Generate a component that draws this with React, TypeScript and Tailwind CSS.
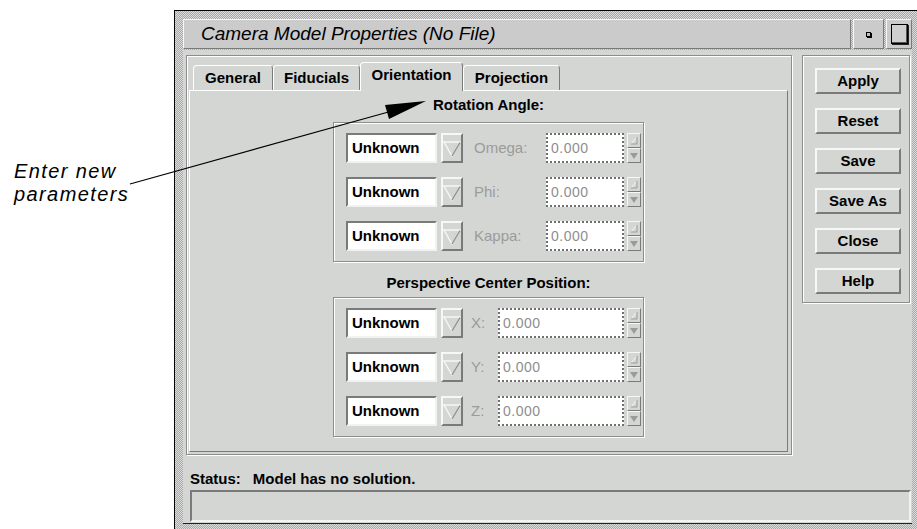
import React from "react"

const ui = { fontFamily: '"Liberation Sans", Arial, Helvetica, sans-serif' }

const raised = "border-2 border-t-[#f7f7f7] border-l-[#f7f7f7] border-r-[#7a7a7a] border-b-[#7a7a7a]"
const raised1 = "border border-t-[#f7f7f7] border-l-[#f7f7f7] border-r-[#7a7a7a] border-b-[#7a7a7a]"
const sunken = "border-2 border-t-[#7a7a7a] border-l-[#7a7a7a] border-r-[#f2f2f2] border-b-[#f2f2f2]"
const etched = "border border-[#8d8d8d] shadow-[inset_1px_1px_0_#ffffff,1px_1px_0_#ffffff]"
const stipple = "bg-[image:repeating-conic-gradient(#a8a8a8_0_25%,#dcdcdc_0_50%)] bg-[length:2px_2px]"

type RowDef = { label: string; labelCls: string; fieldCls: string }

const rotation: RowDef[] = [
  { label: "Omega:", labelCls: "ml-[11px] w-[72px]", fieldCls: "w-[78px]" },
  { label: "Phi:", labelCls: "ml-[11px] w-[72px]", fieldCls: "w-[78px]" },
  { label: "Kappa:", labelCls: "ml-[11px] w-[72px]", fieldCls: "w-[78px]" },
]

const position: RowDef[] = [
  { label: "X:", labelCls: "ml-[8px] w-[27px]", fieldCls: "w-[126px]" },
  { label: "Y:", labelCls: "ml-[8px] w-[27px]", fieldCls: "w-[126px]" },
  { label: "Z:", labelCls: "ml-[8px] w-[27px]", fieldCls: "w-[126px]" },
]

function OptionArrow() {
  return (
    <svg width="18" height="16" viewBox="0 0 18 16" className="mt-[1px]">
      <polygon points="1,1 17,1 9,15" fill="#d4d6d4" stroke="#f6f6f6" strokeWidth="1.4" />
      <line x1="17" y1="1.5" x2="9" y2="15" stroke="#8c8c8c" strokeWidth="1.4" />
    </svg>
  )
}

function Spinner() {
  return (
    <div className="ml-[3px] flex w-[14px] flex-col">
      <div className={`${raised1} flex h-[15px] items-center justify-center bg-[#d4d6d4]`}>
        <svg width="8" height="9" viewBox="0 0 8 9">
          <polygon points="1,8 7,8 7,1" fill="#d4d6d4" stroke="#f6f6f6" strokeWidth="1" />
          <line x1="7" y1="1" x2="7" y2="8" stroke="#8c8c8c" />
          <line x1="1" y1="8" x2="7" y2="8" stroke="#8c8c8c" />
        </svg>
      </div>
      <div className={`${raised1} flex h-[15px] items-center justify-center bg-[#d4d6d4]`}>
        <svg width="8" height="6" viewBox="0 0 8 6">
          <polygon points="0,0 8,0 4,6" fill="#9a9a9a" />
        </svg>
      </div>
    </div>
  )
}

function Row({ row }: { row: RowDef }) {
  return (
    <div className="flex h-[30px] items-stretch">
      <div className={`${sunken} flex w-[91px] items-center bg-white pl-[4px] text-[15px] font-bold text-black`}>
        Unknown
      </div>
      <div className={`${raised} ml-[4px] flex w-[22px] items-center justify-center bg-[#d4d6d4]`}>
        <OptionArrow />
      </div>
      <div className={`${row.labelCls} flex items-center text-[15px] text-[#9b9b9b]`}>{row.label}</div>
      <div
        className={`${row.fieldCls} flex items-center border-2 border-dotted border-[#6f6f6f] bg-white pl-[3px] text-[14px] tracking-[0.5px] text-[#8e8e8e]`}
      >
        0.000
      </div>
      <Spinner />
    </div>
  )
}

function GroupBox({ rows }: { rows: RowDef[] }) {
  return (
    <div className={`${etched} mx-auto flex w-[311px] flex-col gap-[14px] pb-[10px] pl-[12px] pt-[10px]`}>
      {rows.map((r) => (
        <Row key={r.label} row={r} />
      ))}
    </div>
  )
}

const tabs = [
  { name: "General", w: "w-[80px]" },
  { name: "Fiducials", w: "w-[87px]" },
  { name: "Orientation", w: "w-[103px]", active: true },
  { name: "Projection", w: "w-[97px]" },
]

const actions = ["Apply", "Reset", "Save", "Save As", "Close", "Help"]

export default function App() {
  return (
    <div className="relative flex h-[529px] w-[917px] overflow-hidden bg-white text-black" style={ui}>
      {/* Callout text */}
      <div className="w-[174px] shrink-0 pl-[14px] pt-[160px] text-[20px] italic leading-[23px] tracking-[1.4px] text-black">
        <div>Enter new</div>
        <div>parameters</div>
      </div>

      {/* Window */}
      <div className={`${stipple} mt-[10px] h-[519px] w-[743px] shrink-0 border-l border-t border-black pl-[8px] pt-[8px]`}>
        {/* Title bar */}
        <div className="flex h-[30px] w-[729px] gap-[2px]">
          <div className={`${raised1} flex flex-1 items-center bg-[#cbcbcb] pl-[17px] text-[19px] italic text-black`}>
            Camera Model Properties (No File)
          </div>
          <div className={`${raised1} flex w-[31px] items-center justify-center bg-[#cbcbcb]`}>
            <div className="h-[5px] w-[5px] border border-black bg-[#bdbdbd] shadow-[1px_1px_0_#000]" />
          </div>
          <div className={`${raised1} flex w-[26px] items-center justify-center bg-[#cbcbcb]`}>
            <div className="h-[20px] w-[17px] border border-black bg-[#cfcfcf] shadow-[inset_-1px_-1px_0_#555,1px_1px_0_#222]" />
          </div>
        </div>

        {/* Body */}
        <div className="mt-[1px] flex h-[474px] w-[729px] flex-col border-b border-[#222] bg-[#d4d6d4] pl-[3px] pt-[5px]">
          <div className="flex items-start">
            {/* Tab folder */}
            <div className={`${etched} flex h-[400px] w-[606px] flex-col pt-[6px]`}>
              <div className="flex h-[28px] items-end pl-[6px]">
                {tabs.map((t) =>
                  t.active ? (
                    <div
                      key={t.name}
                      className={`${t.w} relative z-10 -mb-px flex h-[29px] items-center justify-center rounded-t-[4px] border-l border-r border-t border-l-white border-r-[#7a7a7a] border-t-white bg-[#d4d6d4] pb-[3px] text-[15px] font-bold`}
                    >
                      {t.name}
                    </div>
                  ) : (
                    <div
                      key={t.name}
                      className={`${t.w} flex h-[25px] items-center justify-center rounded-t-[4px] border-l border-r border-t border-l-white border-r-[#7a7a7a] border-t-white bg-[#d4d6d4] text-[15px] font-bold`}
                    >
                      {t.name}
                    </div>
                  )
                )}
              </div>
              <div className="mb-[2px] ml-[2px] mr-[3px] flex flex-1 flex-col border border-b-[#7a7a7a] border-l-white border-r-[#7a7a7a] border-t-white pt-[5px]">
                <div className="h-[17px] text-center text-[15px] font-bold leading-[17px]">Rotation Angle:</div>
                <div className="mt-[9px]">
                  <GroupBox rows={rotation} />
                </div>
                <div className="mt-[12px] h-[17px] text-center text-[15px] font-bold leading-[17px]">
                  Perspective Center Position:
                </div>
                <div className="mt-[6px]">
                  <GroupBox rows={position} />
                </div>
              </div>
            </div>

            {/* Action buttons */}
            <div className={`${etched} ml-[10px] flex h-[248px] w-[108px] flex-col gap-[14px] pl-[12px] pt-[12px]`}>
              {actions.map((a) => (
                <div
                  key={a}
                  className={`${raised} flex h-[26px] w-[86px] items-center justify-center bg-[#d4d6d4] text-[15px] font-bold`}
                >
                  {a}
                </div>
              ))}
            </div>
          </div>

          {/* Status */}
          <div className="mt-[15px] flex h-[17px] items-center pl-[4px] text-[15px] font-bold leading-[17px]">
            <span>Status:</span>
            <span className="ml-[12px]">Model has no solution.</span>
          </div>
          <div className={`${sunken} ml-[4px] mr-[1px] mt-[3px] h-[32px] bg-[#d4d6d4]`} />
        </div>
      </div>

      {/* Callout leader line */}
      <svg className="pointer-events-none absolute left-0 top-0" width="917" height="529">
        <line x1="130" y1="184" x2="392" y2="111" stroke="#000" strokeWidth="1.2" />
        <polygon points="426,101 385,105 389,119" fill="#000" />
      </svg>
    </div>
  )
}
